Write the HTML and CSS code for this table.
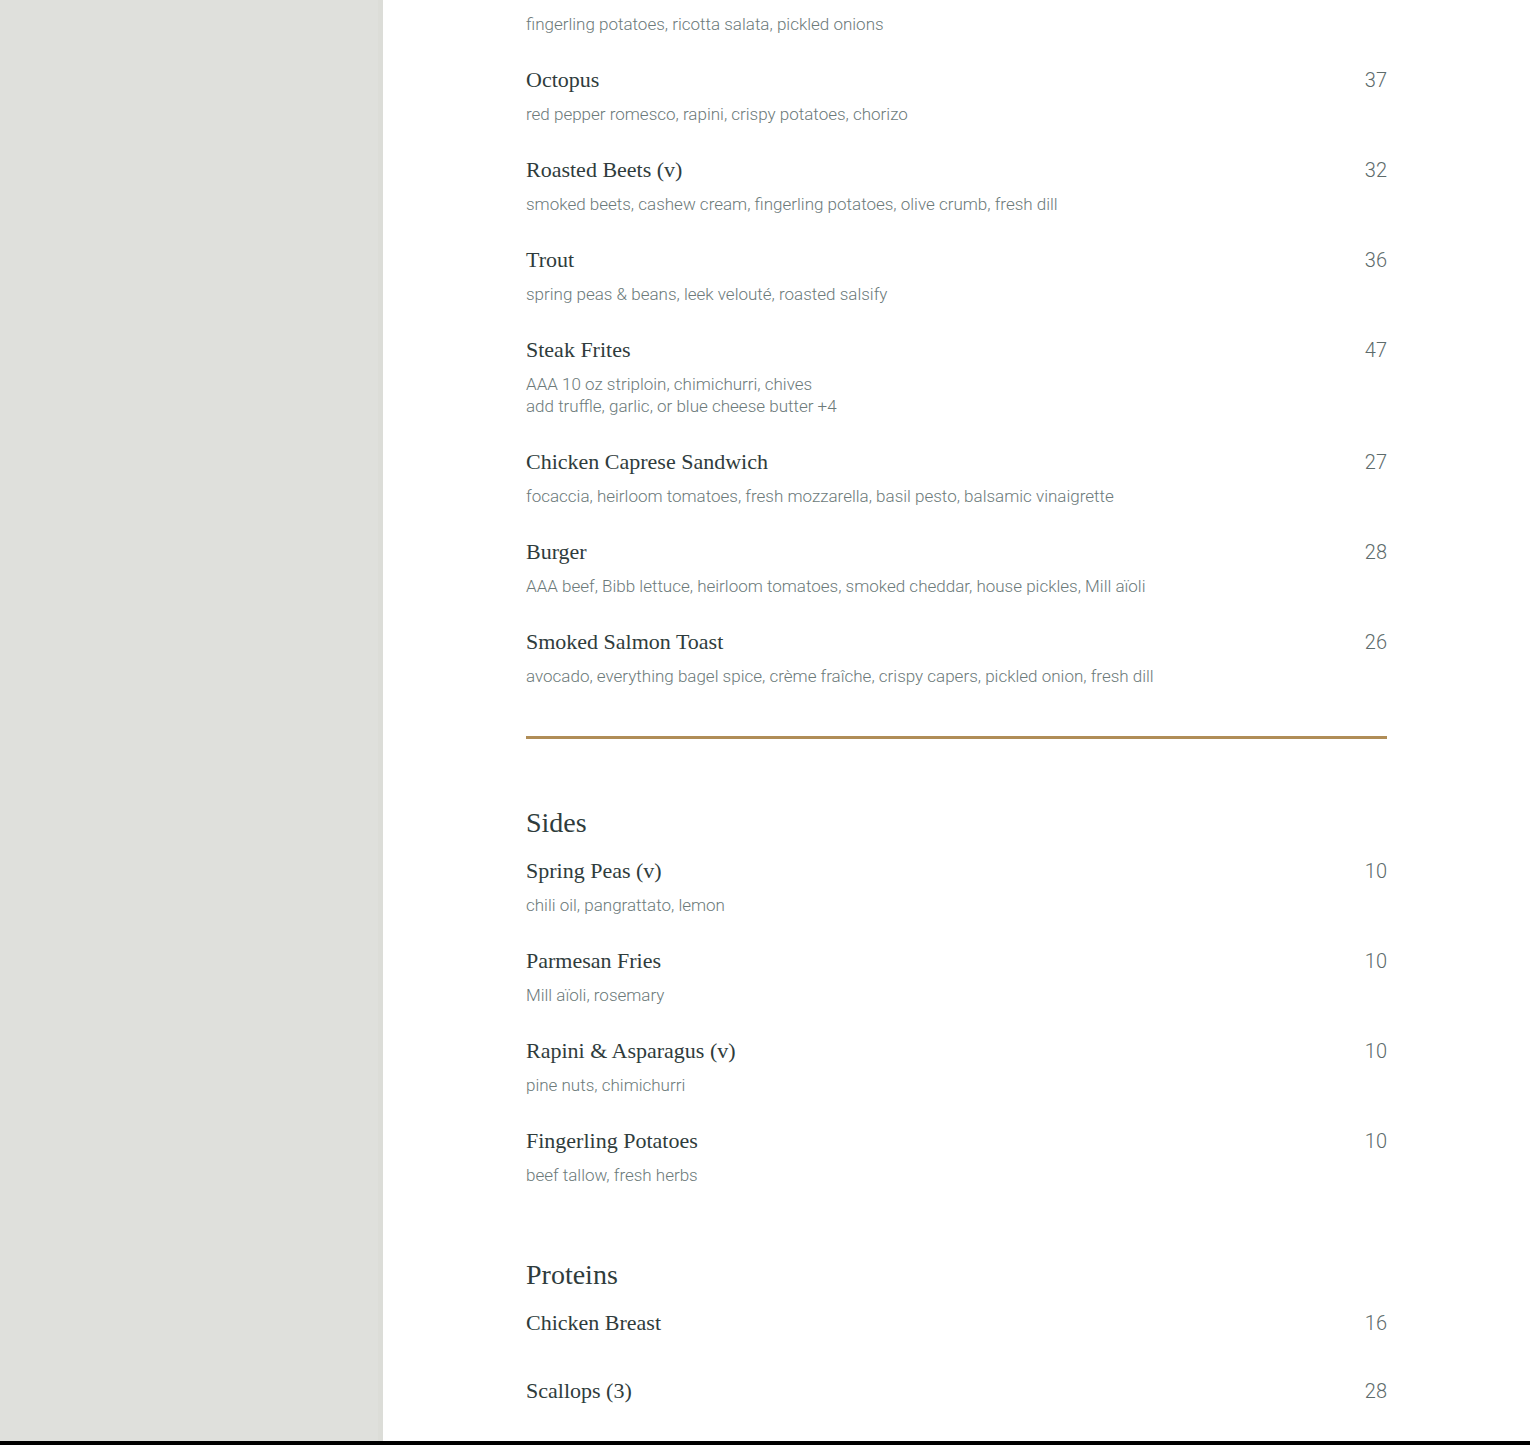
FILE: index.html
```html
<!DOCTYPE html>
<html lang="en">
<head>
    <meta charset="UTF-8">
    <meta name="viewport" content="width=device-width, initial-scale=1.0">
    <title>Menu</title>
    <link rel="stylesheet" href="styles.css">
</head>
<body>

  <div class="page">
    <aside class="sidebar"></aside>

    <main class="content">
      <div class="menu">

        <section class="menu-section mains">
          <div class="item">
            <div class="item-head"><h3 class="item-name">Arctic Char</h3><span class="price">38</span></div>
            <p class="item-desc">fingerling potatoes, ricotta salata, pickled onions</p>
          </div>
          <div class="item">
            <div class="item-head"><h3 class="item-name">Octopus</h3><span class="price">37</span></div>
            <p class="item-desc">red pepper romesco, rapini, crispy potatoes, chorizo</p>
          </div>
          <div class="item">
            <div class="item-head"><h3 class="item-name">Roasted Beets (v)</h3><span class="price">32</span></div>
            <p class="item-desc">smoked beets, cashew cream, fingerling potatoes, olive crumb, fresh dill</p>
          </div>
          <div class="item">
            <div class="item-head"><h3 class="item-name">Trout</h3><span class="price">36</span></div>
            <p class="item-desc">spring peas &amp; beans, leek velouté, roasted salsify</p>
          </div>
          <div class="item">
            <div class="item-head"><h3 class="item-name">Steak Frites</h3><span class="price">47</span></div>
            <p class="item-desc">AAA 10 oz striploin, chimichurri, chives<br>add truffle, garlic, or blue cheese butter +4</p>
          </div>
          <div class="item">
            <div class="item-head"><h3 class="item-name">Chicken Caprese Sandwich</h3><span class="price">27</span></div>
            <p class="item-desc">focaccia, heirloom tomatoes, fresh mozzarella, basil pesto, balsamic vinaigrette</p>
          </div>
          <div class="item">
            <div class="item-head"><h3 class="item-name">Burger</h3><span class="price">28</span></div>
            <p class="item-desc">AAA beef, Bibb lettuce, heirloom tomatoes, smoked cheddar, house pickles, Mill aïoli</p>
          </div>
          <div class="item">
            <div class="item-head"><h3 class="item-name">Smoked Salmon Toast</h3><span class="price">26</span></div>
            <p class="item-desc">avocado, everything bagel spice, crème fraîche, crispy capers, pickled onion, fresh dill</p>
          </div>
        </section>

        <hr class="divider">

        <section class="menu-section">
          <h2 class="section-title">Sides</h2>
          <div class="item">
            <div class="item-head"><h3 class="item-name">Spring Peas (v)</h3><span class="price">10</span></div>
            <p class="item-desc">chili oil, pangrattato, lemon</p>
          </div>
          <div class="item">
            <div class="item-head"><h3 class="item-name">Parmesan Fries</h3><span class="price">10</span></div>
            <p class="item-desc">Mill aïoli, rosemary</p>
          </div>
          <div class="item">
            <div class="item-head"><h3 class="item-name">Rapini &amp; Asparagus (v)</h3><span class="price">10</span></div>
            <p class="item-desc">pine nuts, chimichurri</p>
          </div>
          <div class="item">
            <div class="item-head"><h3 class="item-name">Fingerling Potatoes</h3><span class="price">10</span></div>
            <p class="item-desc">beef tallow, fresh herbs</p>
          </div>
        </section>

        <section class="menu-section proteins">
          <h2 class="section-title">Proteins</h2>
          <div class="item">
            <div class="item-head"><h3 class="item-name">Chicken Breast</h3><span class="price">16</span></div>
            <p class="item-desc"></p>
          </div>
          <div class="item">
            <div class="item-head"><h3 class="item-name">Scallops (3)</h3><span class="price">28</span></div>
            <p class="item-desc"></p>
          </div>
        </section>

      </div>
    </main>
  </div>

  <footer class="footer"></footer>

</body>
</html>
```

FILE: styles.css
```css
html, body {
  margin: 0;
  padding: 0;
}

body {
  background: #000;
  font-family: Roboto, "Liberation Sans", sans-serif;
}

.page {
  display: flex;
  height: 1441px;
  overflow: hidden;
  background: #fff;
}

.sidebar {
  width: 378px;
  flex: none;
  background: #dfe0dc;
  border-right: 5px solid #dcddd8;
}

.content {
  flex: 1;
  padding: 0 143px;
}

.menu {
  margin-top: -25px;
}

.menu-section {margin: 0;}

.item {margin-bottom: 30px;}
.item:last-child {margin-bottom: 0;}

.item-head {
  display: flex;
  justify-content: space-between;
  align-items: baseline;
}

.item-name {
  margin: 0;
  font-family: "Liberation Serif", "DejaVu Serif", serif;
  font-weight: normal;
  font-size: 22px;
  line-height: 30px;
  color: #2f3c3c;
}

.price {
  font-family: Roboto, sans-serif;
  font-weight: 300;
  font-size: 20px;
  line-height: 30px;
  color: #5d6b6b;
}

.item-desc {
  margin: 0;
  padding-top: 8px;
  font-family: Roboto, sans-serif;
  font-weight: 300;
  font-size: 17px;
  line-height: 22px;
  color: #6c7a7a;
}

.divider {
  border: none;
  height: 3px;
  background: #b08d57;
  margin: 49px 0 66px;
}

.section-title {
  margin: 0 0 15px;
  font-family: "Liberation Serif", "DejaVu Serif", serif;
  font-weight: normal;
  font-size: 28px;
  line-height: 36px;
  color: #2f3c3c;
}

.proteins {margin-top: 71px;}

.footer {
  height: 4px;
  background: #000;
}
```
